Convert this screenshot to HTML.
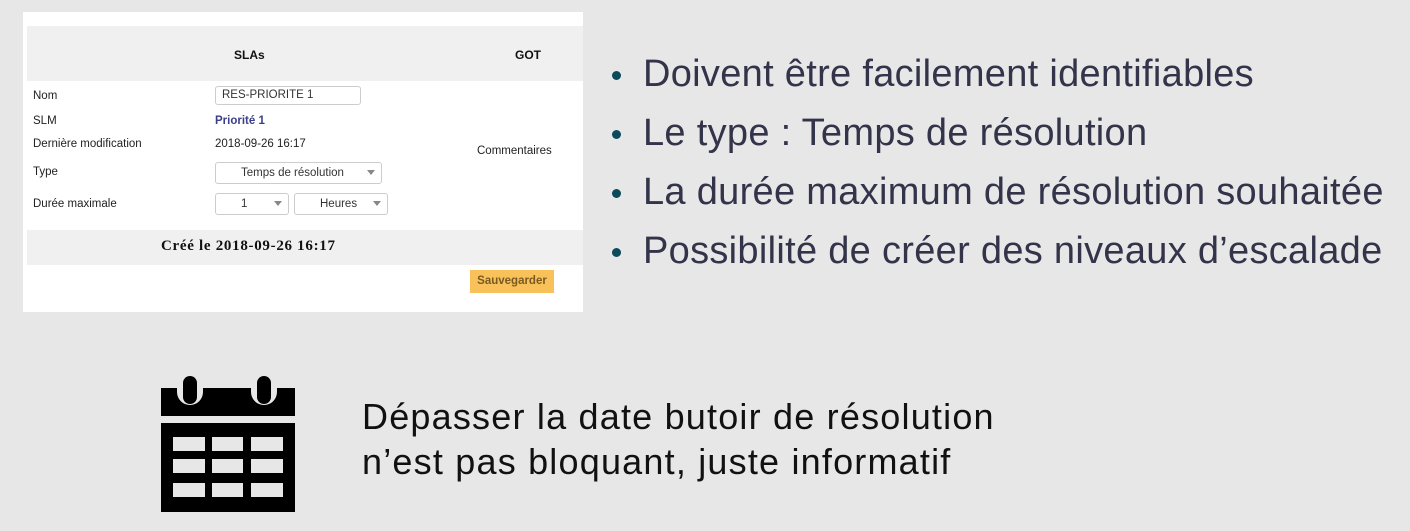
<!DOCTYPE html>
<html><head><meta charset="utf-8"><style>
body{margin:0;width:1410px;height:531px;background:#e6e7e6;position:relative;overflow:hidden;font-family:"Liberation Sans",sans-serif}
.panel{position:absolute;left:23px;top:12px;width:560px;height:300px;background:#fff}
.g{position:absolute;background:#f0f0f0;left:4px;width:556px}
.t{position:absolute;font-size:11.5px;color:#222;white-space:nowrap}
.b{font-weight:bold;color:#111;font-size:12px}
.in{position:absolute;border:1px solid #ccc;border-radius:3px;background:#fff;height:19px;box-sizing:border-box;font-size:11.5px;color:#333;line-height:17px}
.arr{position:absolute;right:6px;top:7px;border-left:4px solid transparent;border-right:4px solid transparent;border-top:5px solid #888}
.bl{position:absolute;left:612px;font-size:38px;color:#33334a;white-space:nowrap;letter-spacing:0.3px}
.bl:before{content:"";position:absolute;left:0;top:18px;width:9px;height:9px;border-radius:50%;background:#0a4a5a}
.bl span{margin-left:31px}
.bt{position:absolute;left:362px;font-size:36px;color:#111;white-space:nowrap;letter-spacing:1.2px}
</style></head><body>
<div class="panel">
 <div class="g" style="top:14px;height:55px"></div>
 <div class="t b" style="left:211px;top:36px">SLAs</div>
 <div class="t b" style="left:492px;top:36px">GOT</div>
 <div class="t" style="left:10px;top:78px">Nom</div>
 <div class="in" style="left:192px;top:74px;width:146px;padding-left:6px">RES-PRIORITE 1</div>
 <div class="t" style="left:10px;top:103px">SLM</div>
 <div class="t" style="left:192px;top:103px;font-weight:bold;color:#3a3f8a">Priorité 1</div>
 <div class="t" style="left:10px;top:126px">Dernière modification</div>
 <div class="t" style="left:192px;top:126px">2018-09-26 16:17</div>
 <div class="t" style="left:454px;top:133px">Commentaires</div>
 <div class="t" style="left:10px;top:154px">Type</div>
 <div class="in" style="left:192px;top:150px;width:167px;height:22px;line-height:20px;padding-left:25px">Temps de résolution<div class="arr"></div></div>
 <div class="t" style="left:10px;top:186px">Durée maximale</div>
 <div class="in" style="left:192px;top:181px;width:74px;height:22px;line-height:20px;padding-left:25px">1<div class="arr"></div></div>
 <div class="in" style="left:271px;top:181px;width:94px;height:22px;line-height:20px;padding-left:25px">Heures<div class="arr"></div></div>
 <div class="g" style="top:218px;height:35px"></div>
 <div class="t" style="left:138px;top:226px;font-family:'Liberation Serif',serif;font-weight:bold;font-size:15px;letter-spacing:0.7px;color:#111">Créé le 2018-09-26 16:17</div>
 <div style="position:absolute;left:447px;top:258px;width:84px;height:23px;background:#f8c15a;color:#7a5a20;font-size:11.5px;font-weight:bold;line-height:23px;text-align:center">Sauvegarder</div>
</div>
<div class="bl" style="top:53px"><span>Doivent être facilement identifiables</span></div>
<div class="bl" style="top:112px"><span>Le type : Temps de résolution</span></div>
<div class="bl" style="top:171px"><span>La durée maximum de résolution souhaitée</span></div>
<div class="bl" style="top:230px"><span>Possibilité de créer des niveaux d’escalade</span></div>
<svg style="position:absolute;left:0;top:0" width="1410" height="531">
 <path fill="#000" d="M161 388H177V392A13 13 0 0 0 203 392V388H251V392A13 13 0 0 0 277 392V388H295V416H161Z"/>
 <rect x="183" y="376" width="14" height="28" rx="7" fill="#000"/>
 <rect x="257" y="376" width="14" height="28" rx="7" fill="#000"/>
 <rect x="161" y="423" width="134" height="89" fill="#000"/>
 <g fill="#e6e7e6">
  <rect x="173" y="437" width="32" height="14"/><rect x="212" y="437" width="31" height="14"/><rect x="251" y="437" width="32" height="14"/>
  <rect x="173" y="459" width="32" height="14"/><rect x="212" y="459" width="31" height="14"/><rect x="251" y="459" width="32" height="14"/>
  <rect x="173" y="483" width="32" height="14"/><rect x="212" y="483" width="31" height="14"/><rect x="251" y="483" width="32" height="14"/>
 </g>
</svg>
<div class="bt" style="top:396px">Dépasser la date butoir de résolution</div>
<div class="bt" style="top:441px">n’est pas bloquant, juste informatif</div>
</body></html>
